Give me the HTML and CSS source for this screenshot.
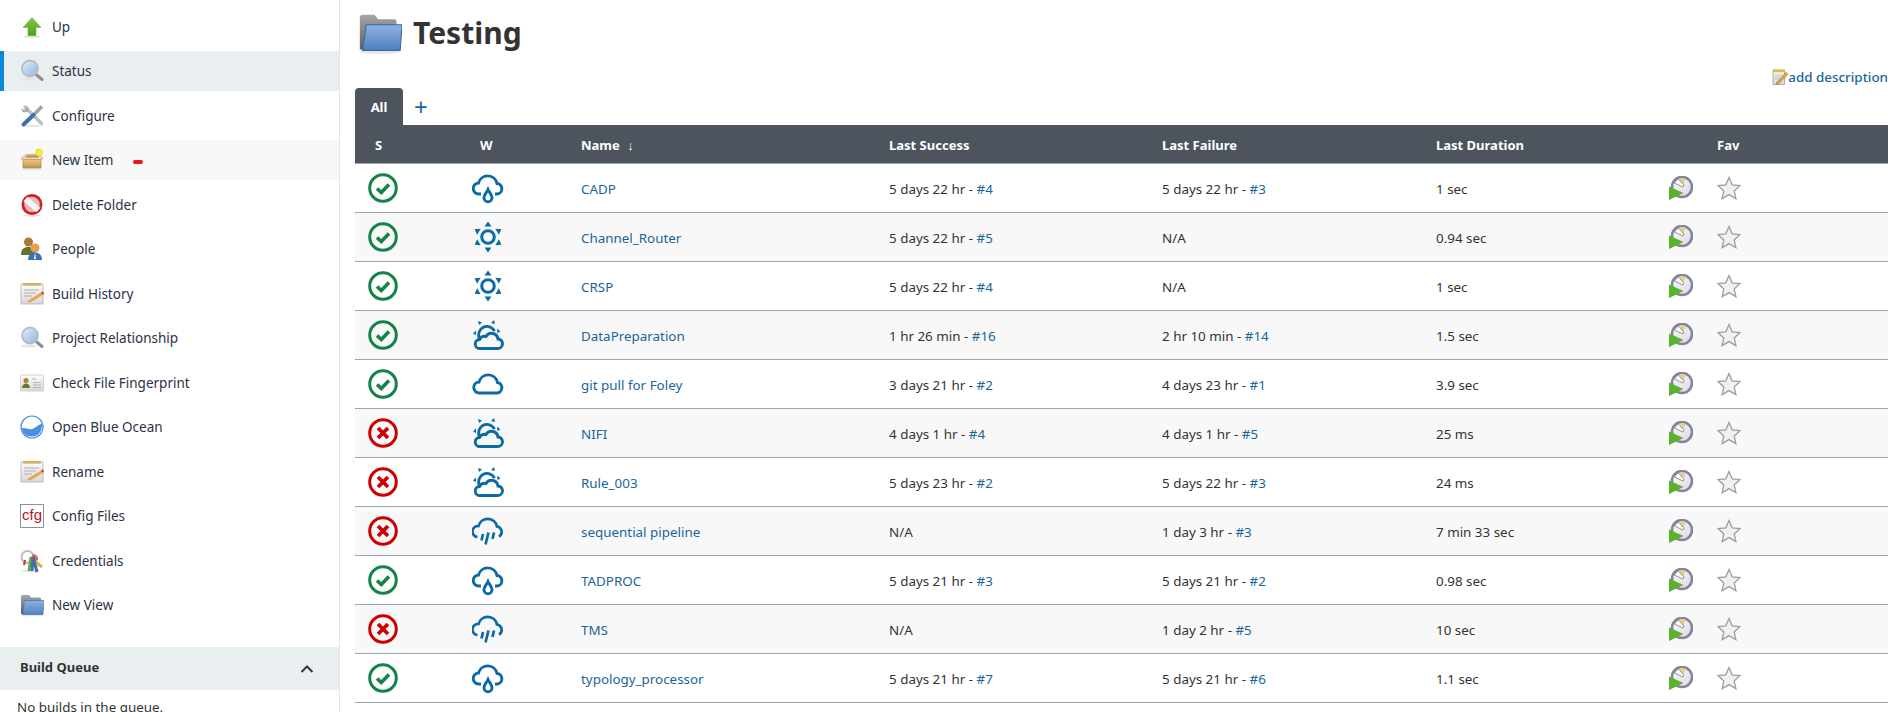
FILE: index.html
```html
<!DOCTYPE html>
<html lang="en">
<head>
    <meta charset="UTF-8">
    <title>Testing</title>
    <link rel="stylesheet" href="styles.css">
</head>
<body>
    <svg class="icon-defs" xmlns="http://www.w3.org/2000/svg">
        <defs>
            <linearGradient id="g-green" x1="0" y1="0" x2="0" y2="1"><stop offset="0" stop-color="#8cc152"/><stop offset="1" stop-color="#4ca50c"/></linearGradient>
            <linearGradient id="g-lens" x1="0" y1="0" x2="1" y2="1"><stop offset="0" stop-color="#e4eefa"/><stop offset="1" stop-color="#8db4e2"/></linearGradient>
            <linearGradient id="g-box" x1="0" y1="0" x2="0" y2="1"><stop offset="0" stop-color="#e8c88f"/><stop offset="1" stop-color="#c8924a"/></linearGradient>
            <linearGradient id="g-folder" x1="0" y1="0" x2="0" y2="1"><stop offset="0" stop-color="#8db2df"/><stop offset="1" stop-color="#4f80c0"/></linearGradient>
            <linearGradient id="g-grey" x1="0" y1="0" x2="0" y2="1"><stop offset="0" stop-color="#a6a6a6"/><stop offset="1" stop-color="#5e5e5e"/></linearGradient>
            <linearGradient id="g-paper" x1="0" y1="0" x2="0" y2="1"><stop offset="0" stop-color="#fbfbfb"/><stop offset="1" stop-color="#d8d8d8"/></linearGradient>
            <linearGradient id="g-face" x1="0" y1="0" x2="1" y2="1"><stop offset="0" stop-color="#fafafa"/><stop offset="1" stop-color="#d9d9e2"/></linearGradient>
        </defs>

        <symbol id="i-up" viewBox="0 0 24 24">
            <ellipse cx="12" cy="21.5" rx="8" ry="1.4" fill="#ddd"/>
            <path d="M12 2.5 21 12.5h-5v8H8v-8H3z" fill="url(#g-green)" stroke="#6d9f3a" stroke-width=".5"/>
        </symbol>
        <symbol id="i-search" viewBox="0 0 24 24">
            <ellipse cx="9" cy="20" rx="8" ry="1.6" fill="#e6e6e6"/>
            <path d="M15 14.5 22 20.5" stroke="#8a8f96" stroke-width="3" stroke-linecap="round"/>
            <circle cx="10" cy="9.5" r="8" fill="url(#g-lens)" stroke="#b8bcc2" stroke-width="1.8"/>
        </symbol>
        <symbol id="i-tools" viewBox="0 0 24 24">
            <ellipse cx="12" cy="22" rx="10" ry="1.2" fill="#e6e6e6"/>
            <path d="M5 3 21.5 19.5" stroke="#bcc0c4" stroke-width="3.4" stroke-linecap="round"/>
            <path d="M6.500 1.500a4.800 4.800 0 0 1 1.500 6.500L3.500 8.500A4.800 4.800 0 0 1 1.500 4L4 6 6.500 4z" fill="#a9adb3"/>
            <path d="M22 2.500 13 11.500" stroke="#9aa3ad" stroke-width="3.400"/>
            <path d="M13.500 11 3.500 20.500" stroke="#3f6fae" stroke-width="4" stroke-linecap="round"/>
        </symbol>
        <symbol id="i-box" viewBox="0 0 24 24">
            <ellipse cx="12" cy="21" rx="10" ry="1.300" fill="#e6e6e6"/>
            <path d="M3 11h18v9H3z" fill="url(#g-box)" stroke="#a87a3c" stroke-width=".6"/>
            <path d="M1 10.500 6 6.500h12l5 4-2 1H3z" fill="#f0dcb5" stroke="#b98d4f" stroke-width=".6"/>
            <path d="M7 7.500h10l2 2H5z" fill="#a98a5f"/>
            <circle cx="19" cy="4.500" r="3.400" fill="#f7ee3c" stroke="#e0c91a" stroke-width=".6"/>
        </symbol>
        <symbol id="i-delete" viewBox="0 0 24 24">
            <ellipse cx="12" cy="22.500" rx="9" ry="1.200" fill="#ddd"/>
            <circle cx="12" cy="11.500" r="10.500" fill="#cb1f24"/>
            <circle cx="12" cy="11.500" r="7.800" fill="#e9b9b9"/>
            <path d="M5.500 6 18.500 17" stroke="#f7f7f7" stroke-width="6"/>
            <path d="M5.500 4.500 18.500 15.500" stroke="#cb1f24" stroke-width="0"/>
        </symbol>
        <symbol id="i-people" viewBox="0 0 24 24">
            <circle cx="8.500" cy="5" r="4.500" fill="#a67c3c"/>
            <path d="M1 18c0-6 3-8 7.500-8s7 2 7 8z" fill="#66752d"/>
            <circle cx="15" cy="11" r="4.500" fill="#e3a04f"/>
            <path d="M8 23c0-5 3-7.500 7-7.500s7 2.500 7 7.500z" fill="#3a73b5"/>
            <path d="M15 15.500 14 22h2z" fill="#fff"/>
        </symbol>
        <symbol id="i-notepad" viewBox="0 0 24 24">
            <rect x="1" y="2" width="22" height="20" fill="url(#g-paper)" stroke="#b0b0b0" stroke-width=".8"/>
            <rect x="3" y="1" width="18" height="2.600" fill="#c9b458"/>
            <path d="M4 8h15M4 11h12M4 14h8" stroke="#b0b0b0" stroke-width="1"/>
            <path d="M8 18.500 21 10.500l2.200 2.200-12 7.300-4 .5z" fill="#e0a94f"/>
            <path d="M21 10.500l2.200 2.200 1-1.200-2-2.200z" fill="#c8322d"/>
        </symbol>
        <symbol id="i-card" viewBox="0 0 24 24">
            <rect x=".5" y="4" width="23" height="16" rx="1" fill="url(#g-paper)" stroke="#c0c0c0" stroke-width=".7"/>
            <circle cx="6" cy="9.500" r="2.500" fill="#a8812f"/>
            <path d="M2 17c0-3 2-4.500 4-4.500s4 1.500 4 4.500z" fill="#5d7a2e"/>
            <path d="M12 8h4M13 11.500h8M13 14h8M13 16.500h8" stroke="#b5b5b5" stroke-width="1"/>
        </symbol>
        <symbol id="i-ocean" viewBox="0 0 24 24">
            <circle cx="12" cy="12" r="11" fill="#fff" stroke="#4a90e8" stroke-width="1.200"/>
            <path d="M2 13.500C5 12 8 15 12 14S18 9 22 9c.4 5-2 12.500-10 12.500C6 21.500 2.500 18 2 13.500z" fill="#4a90e2"/>
        </symbol>
        <symbol id="i-keys" viewBox="0 0 24 24">
            <ellipse cx="10" cy="22" rx="9" ry="1.200" fill="#e3e3e3"/>
            <circle cx="7.500" cy="8" r="6" fill="none" stroke="#bbb" stroke-width="1.800"/>
            <path d="M13 11 22 18" stroke="#d5b64a" stroke-width="3.400"/>
            <path d="M13 5a5 5 0 0 1 5 6l-4 2-4-3z" fill="#d9694a"/>
            <path d="M11 8 9 22" stroke="#5fae3c" stroke-width="3"/>
            <path d="M13 8 17 23M13 8 12 22" stroke="#3f6fae" stroke-width="3"/>
            <path d="M5 11 4 16" stroke="#c8322d" stroke-width="2"/>
        </symbol>
        <symbol id="i-folder" viewBox="0 0 24 24">
            <ellipse cx="12" cy="22.300" rx="11" ry="1" fill="#e3e3e3"/>
            <path d="M1 3.500Q1 2 2.500 2H9l2 2.500h9q1 0 1 1.500v2H4.500L3.500 21H1z" fill="url(#g-grey)"/>
            <path d="M4.500 7.500H24L23 21.500H2.500z" fill="url(#g-folder)" stroke="#3c68a5" stroke-width=".6"/>
        </symbol>
        <symbol id="i-edit" viewBox="0 0 24 24">
            <rect x="1.500" y="3" width="17" height="20" fill="url(#g-paper)" stroke="#8a8a8a"/>
            <rect x="2" y="1" width="17" height="3.500" fill="#e3c04a" stroke="#b5952f" stroke-width=".5"/>
            <path d="M4 9h11M4 12h9M4 15h6" stroke="#b0b0b0"/>
            <path d="M7 20 21 5l3 3-14 14-4 1z" fill="#e0a94f" stroke="#7d5a1f" stroke-width=".7"/>
        </symbol>

        <symbol id="s-ok" viewBox="0 0 30 30">
            <circle cx="15" cy="15" r="13.300" fill="none" stroke="#138347" stroke-width="3"/>
            <path d="M9 15.500 13.300 19.500 21 11.500" fill="none" stroke="#138347" stroke-width="3.600"/>
        </symbol>
        <symbol id="s-fail" viewBox="0 0 30 30">
            <circle cx="15" cy="15" r="13.300" fill="none" stroke="#cc0003" stroke-width="3"/>
            <path d="M10 10 20 20M20 10 10 20" fill="none" stroke="#cc0003" stroke-width="3.800"/>
        </symbol>

        <symbol id="w-drop" viewBox="0 0 32 32">
            <g fill="none" stroke="#0b6aa2" stroke-width="2.900">
                <path d="M9 22H7a5.500 5.500 0 0 1-.5-11A9.500 9.500 0 0 1 25 11.500 5.300 5.300 0 0 1 25.500 22H23"/>
                <path d="M16 17.500C14.500 21 12 22.500 12 25.700a4 4 0 0 0 8 0C20 22.500 17.500 21 16 17.500z"/>
            </g>
        </symbol>
        <symbol id="w-sun" viewBox="0 0 32 32">
            <circle cx="16" cy="16" r="6.300" fill="none" stroke="#0b6aa2" stroke-width="3"/>
            <g fill="#0b6aa2">
                <path d="M16 .5 19.500 5.500h-7z"/>
                <path d="M16 .5 19.500 5.500h-7z" transform="rotate(60 16 16)"/>
                <path d="M16 .5 19.500 5.500h-7z" transform="rotate(120 16 16)"/>
                <path d="M16 .5 19.500 5.500h-7z" transform="rotate(180 16 16)"/>
                <path d="M16 .5 19.500 5.500h-7z" transform="rotate(240 16 16)"/>
                <path d="M16 .5 19.500 5.500h-7z" transform="rotate(300 16 16)"/>
            </g>
        </symbol>
        <symbol id="w-partly" viewBox="0 0 32 32">
            <g fill="none" stroke="#0b6aa2" stroke-width="2.900">
                <path d="M8 29.500H25.500a4.500 4.500 0 0 0 .5-9.500A6.500 6.500 0 0 0 14 17.500 6 6 0 0 0 7.500 20.500 4.500 4.500 0 0 0 8 29.500z"/>
                <path d="M7.500 19.500A8 8 0 0 1 22.500 12"/>
            </g>
            <g fill="#0b6aa2">
                <path d="M6 2 10 3.500 7 6z"/>
                <path d="M22 1 23 5 19 4z"/>
                <path d="M1 14.500 4 11.500 4 16z"/>
                <path d="M28.500 12.500 25 9.500 25.500 14z"/>
            </g>
        </symbol>
        <symbol id="w-cloud" viewBox="0 0 32 32">
            <path d="M7.500 25H25a5.300 5.300 0 0 0 .5-10.500A9.500 9.500 0 0 0 7 14 5.500 5.500 0 0 0 7.500 25z" fill="none" stroke="#0b6aa2" stroke-width="2.900"/>
        </symbol>
        <symbol id="w-rain" viewBox="0 0 32 32">
            <g fill="none" stroke="#0b6aa2" stroke-width="2.700">
                <path d="M5.500 22A5.500 5.500 0 0 1 6.500 11 9.500 9.500 0 0 1 25 11.500 5.400 5.400 0 0 1 27 21.500"/>
                <path d="M11 19 9.500 25.500M16.500 17.500 13.500 29.500M22 17.500 20.500 24"/>
            </g>
        </symbol>

        <symbol id="a-build" viewBox="0 0 24 24">
            <circle cx="13" cy="11" r="10" fill="url(#g-face)" stroke="#86829e" stroke-width="2.600"/>
            <path d="M13 11 10.500 2.500A9 9 0 0 1 17 3z" fill="#e3d28c"/>
            <path d="M14 11 5.500 7 9 2.800 15 9z" fill="#fff" stroke="#6b6b6b" stroke-width=".7"/>
            <path d="M0 10.500 14.500 17 0 24z" fill="#58b32c"/>
        </symbol>
        <symbol id="a-star" viewBox="0 0 24 24">
            <path d="M12 1.500 15.200 8.800 23 9.600 17.200 14.900 18.900 22.600 12 18.600 5.100 22.600 6.800 14.900 1 9.600 8.800 8.800z" fill="#f1f1f1" stroke="#9e9e9e" stroke-width="1.300"/>
        </symbol>
    </svg>

    <div class="page">
        <aside class="sidebar">
            <ul class="task-list">
                <li class="task"><svg class="task-icon"><use href="#i-up"/></svg>Up</li>
                <li class="task active"><svg class="task-icon"><use href="#i-search"/></svg>Status</li>
                <li class="task"><svg class="task-icon"><use href="#i-tools"/></svg>Configure</li>
                <li class="task hovered"><svg class="task-icon"><use href="#i-box"/></svg>New Item<span class="red-dash"></span></li>
                <li class="task"><svg class="task-icon"><use href="#i-delete"/></svg>Delete Folder</li>
                <li class="task"><svg class="task-icon"><use href="#i-people"/></svg>People</li>
                <li class="task"><svg class="task-icon"><use href="#i-notepad"/></svg>Build History</li>
                <li class="task"><svg class="task-icon"><use href="#i-search"/></svg>Project Relationship</li>
                <li class="task"><svg class="task-icon"><use href="#i-card"/></svg>Check File Fingerprint</li>
                <li class="task"><svg class="task-icon"><use href="#i-ocean"/></svg>Open Blue Ocean</li>
                <li class="task"><svg class="task-icon"><use href="#i-notepad"/></svg>Rename</li>
                <li class="task">
                    <svg class="task-icon" viewBox="0 0 24 24">
                        <rect x=".5" y=".5" width="23" height="23" fill="#fff" stroke="#777" stroke-width=".8"/>
                        <text class="cfg-text" x="12" y="16" text-anchor="middle">cfg</text>
                    </svg>Config Files
                </li>
                <li class="task"><svg class="task-icon"><use href="#i-keys"/></svg>Credentials</li>
                <li class="task"><svg class="task-icon"><use href="#i-folder"/></svg>New View</li>
            </ul>
            <div class="queue-head">
                <span>Build Queue</span>
                <svg class="chevron" viewBox="0 0 14 10"><path d="M1.500 8 7 2.500 12.500 8" fill="none" stroke="#333" stroke-width="2"/></svg>
            </div>
            <div class="queue-body">No builds in the queue.</div>
        </aside>

        <main class="content">
            <h1 class="title"><svg class="title-icon"><use href="#i-folder"/></svg>Testing</h1>
            <div class="description"><svg class="edit-icon"><use href="#i-edit"/></svg><a href="#">add description</a></div>
            <div class="tabs">
                <div class="tab">All</div>
                <a class="tab-add" href="#">+</a>
            </div>
            <table class="projects">
                <colgroup>
                    <col class="c-s"><col class="c-w"><col class="c-name"><col class="c-ok"><col class="c-fail"><col class="c-dur"><col class="c-run"><col>
                </colgroup>
                <thead>
                    <tr>
                        <th class="th-s">S</th>
                        <th class="th-w">W</th>
                        <th>Name <span class="sort">↓</span></th>
                        <th>Last Success</th>
                        <th>Last Failure</th>
                        <th>Last Duration</th>
                        <th></th>
                        <th>Fav</th>
                    </tr>
                </thead>
                <tbody>
                    <tr>
                        <td class="td-s"><svg class="status"><use href="#s-ok"/></svg></td>
                        <td class="td-w"><svg class="weather"><use href="#w-drop"/></svg></td>
                        <td><a href="#">CADP</a></td>
                        <td>5 days 22 hr - <a href="#">#4</a></td>
                        <td>5 days 22 hr - <a href="#">#3</a></td>
                        <td>1 sec</td>
                        <td class="td-icon"><svg class="action"><use href="#a-build"/></svg></td>
                        <td class="td-icon"><svg class="action"><use href="#a-star"/></svg></td>
                    </tr>
                    <tr>
                        <td class="td-s"><svg class="status"><use href="#s-ok"/></svg></td>
                        <td class="td-w"><svg class="weather"><use href="#w-sun"/></svg></td>
                        <td><a href="#">Channel_Router</a></td>
                        <td>5 days 22 hr - <a href="#">#5</a></td>
                        <td>N/A</td>
                        <td>0.94 sec</td>
                        <td class="td-icon"><svg class="action"><use href="#a-build"/></svg></td>
                        <td class="td-icon"><svg class="action"><use href="#a-star"/></svg></td>
                    </tr>
                    <tr>
                        <td class="td-s"><svg class="status"><use href="#s-ok"/></svg></td>
                        <td class="td-w"><svg class="weather"><use href="#w-sun"/></svg></td>
                        <td><a href="#">CRSP</a></td>
                        <td>5 days 22 hr - <a href="#">#4</a></td>
                        <td>N/A</td>
                        <td>1 sec</td>
                        <td class="td-icon"><svg class="action"><use href="#a-build"/></svg></td>
                        <td class="td-icon"><svg class="action"><use href="#a-star"/></svg></td>
                    </tr>
                    <tr>
                        <td class="td-s"><svg class="status"><use href="#s-ok"/></svg></td>
                        <td class="td-w"><svg class="weather"><use href="#w-partly"/></svg></td>
                        <td><a href="#">DataPreparation</a></td>
                        <td>1 hr 26 min - <a href="#">#16</a></td>
                        <td>2 hr 10 min - <a href="#">#14</a></td>
                        <td>1.5 sec</td>
                        <td class="td-icon"><svg class="action"><use href="#a-build"/></svg></td>
                        <td class="td-icon"><svg class="action"><use href="#a-star"/></svg></td>
                    </tr>
                    <tr>
                        <td class="td-s"><svg class="status"><use href="#s-ok"/></svg></td>
                        <td class="td-w"><svg class="weather"><use href="#w-cloud"/></svg></td>
                        <td><a href="#">git pull for Foley</a></td>
                        <td>3 days 21 hr - <a href="#">#2</a></td>
                        <td>4 days 23 hr - <a href="#">#1</a></td>
                        <td>3.9 sec</td>
                        <td class="td-icon"><svg class="action"><use href="#a-build"/></svg></td>
                        <td class="td-icon"><svg class="action"><use href="#a-star"/></svg></td>
                    </tr>
                    <tr>
                        <td class="td-s"><svg class="status"><use href="#s-fail"/></svg></td>
                        <td class="td-w"><svg class="weather"><use href="#w-partly"/></svg></td>
                        <td><a href="#">NIFI</a></td>
                        <td>4 days 1 hr - <a href="#">#4</a></td>
                        <td>4 days 1 hr - <a href="#">#5</a></td>
                        <td>25 ms</td>
                        <td class="td-icon"><svg class="action"><use href="#a-build"/></svg></td>
                        <td class="td-icon"><svg class="action"><use href="#a-star"/></svg></td>
                    </tr>
                    <tr>
                        <td class="td-s"><svg class="status"><use href="#s-fail"/></svg></td>
                        <td class="td-w"><svg class="weather"><use href="#w-partly"/></svg></td>
                        <td><a href="#">Rule_003</a></td>
                        <td>5 days 23 hr - <a href="#">#2</a></td>
                        <td>5 days 22 hr - <a href="#">#3</a></td>
                        <td>24 ms</td>
                        <td class="td-icon"><svg class="action"><use href="#a-build"/></svg></td>
                        <td class="td-icon"><svg class="action"><use href="#a-star"/></svg></td>
                    </tr>
                    <tr>
                        <td class="td-s"><svg class="status"><use href="#s-fail"/></svg></td>
                        <td class="td-w"><svg class="weather"><use href="#w-rain"/></svg></td>
                        <td><a href="#">sequential pipeline</a></td>
                        <td>N/A</td>
                        <td>1 day 3 hr - <a href="#">#3</a></td>
                        <td>7 min 33 sec</td>
                        <td class="td-icon"><svg class="action"><use href="#a-build"/></svg></td>
                        <td class="td-icon"><svg class="action"><use href="#a-star"/></svg></td>
                    </tr>
                    <tr>
                        <td class="td-s"><svg class="status"><use href="#s-ok"/></svg></td>
                        <td class="td-w"><svg class="weather"><use href="#w-drop"/></svg></td>
                        <td><a href="#">TADPROC</a></td>
                        <td>5 days 21 hr - <a href="#">#3</a></td>
                        <td>5 days 21 hr - <a href="#">#2</a></td>
                        <td>0.98 sec</td>
                        <td class="td-icon"><svg class="action"><use href="#a-build"/></svg></td>
                        <td class="td-icon"><svg class="action"><use href="#a-star"/></svg></td>
                    </tr>
                    <tr>
                        <td class="td-s"><svg class="status"><use href="#s-fail"/></svg></td>
                        <td class="td-w"><svg class="weather"><use href="#w-rain"/></svg></td>
                        <td><a href="#">TMS</a></td>
                        <td>N/A</td>
                        <td>1 day 2 hr - <a href="#">#5</a></td>
                        <td>10 sec</td>
                        <td class="td-icon"><svg class="action"><use href="#a-build"/></svg></td>
                        <td class="td-icon"><svg class="action"><use href="#a-star"/></svg></td>
                    </tr>
                    <tr>
                        <td class="td-s"><svg class="status"><use href="#s-ok"/></svg></td>
                        <td class="td-w"><svg class="weather"><use href="#w-drop"/></svg></td>
                        <td><a href="#">typology_processor</a></td>
                        <td>5 days 21 hr - <a href="#">#7</a></td>
                        <td>5 days 21 hr - <a href="#">#6</a></td>
                        <td>1.1 sec</td>
                        <td class="td-icon"><svg class="action"><use href="#a-build"/></svg></td>
                        <td class="td-icon"><svg class="action"><use href="#a-star"/></svg></td>
                    </tr>
                </tbody>
            </table>
        </main>
    </div>
</body>
</html>
```

FILE: styles.css
```css
html, body {
    height: 100%;
    overflow: hidden;
}
body {
    margin: 0;
    font-family: "Noto Sans", "Open Sans", sans-serif;
    font-size: 13.4px;
    color: #333;
    background-color: #fff;
}
a {
    color: #1a6599;
    text-decoration: none;
}
.icon-defs {
    position: absolute;
    width: 0;
    height: 0;
}
.page {
    display: flex;
    height: 100%;
}

/* side panel */
.sidebar {
    width: 339px;
    flex-shrink: 0;
    border-right: 1px solid #e4e6e8;
}
.task-list {
    list-style: none;
    margin: 0;
    padding: 6.5px 0 0;
    display: flex;
    flex-direction: column;
    gap: 4.5px;
}
.task {
    height: 40px;
    display: flex;
    align-items: center;
    gap: 8px;
    padding-left: 20px;
    color: #2b3245;
    font-size: 13.5px;
}
.task.active {
    background-color: #e9eef0;
    box-shadow: inset 4px 0 0 #0b87d8;
}
.task.hovered {
    background-color: #f8f8f8;
}
.task-icon {
    width: 24px;
    height: 24px;
}
.red-dash {
    width: 10px;
    height: 4px;
    margin-left: 12px;
    margin-top: 3px;
    border-radius: 2px;
    background-color: #e8141c;
}
.cfg-text {
    font-family: "Liberation Sans", sans-serif;
    font-size: 15px;
    fill: #b8141c;
}
.queue-head {
    height: 43px;
    margin-top: 22px;
    padding: 0 20px 3px;
    display: flex;
    align-items: center;
    justify-content: space-between;
    box-sizing: border-box;
    background-color: #e9eef0;
    font-size: 13px;
    font-weight: bold;
}
.chevron {
    width: 14px;
    height: 10px;
    margin-right: 5px;
    margin-top: 3px;
}
.queue-body {
    padding: 8px 17px;
}

/* main area */
.content {
    flex: 1;
    min-width: 0;
    padding: 0 13px 0 15px;
}
.title {
    display: flex;
    align-items: center;
    gap: 11px;
    height: 66px;
    margin: 0;
    padding-left: 3px;
    font-size: 30px;
    font-weight: bold;
    line-height: 1;
    box-sizing: border-box;
}
.title-icon {
    width: 44px;
    height: 44px;
}
.description {
    display: flex;
    justify-content: flex-end;
    align-items: center;
    height: 22px;
    font-weight: 500;
}
.edit-icon {
    width: 16px;
    height: 16px;
}
.tabs {
    display: flex;
    align-items: center;
    height: 37px;
}
.tab {
    width: 48px;
    height: 37px;
    padding-top: 1px;
    line-height: 37px;
    text-align: center;
    box-sizing: border-box;
    border-radius: 4px 4px 0 0;
    background-color: #4d545d;
    color: #fff;
    font-size: 13px;
    font-weight: bold;
}
.tab-add {
    margin-left: 11px;
    font-size: 24px;
    line-height: 37px;
}
.projects {
    width: 100%;
    table-layout: fixed;
    border-collapse: collapse;
}
.c-s { width: 100px; }
.c-w { width: 126px; }
.c-name { width: 308px; }
.c-ok { width: 273px; }
.c-fail { width: 274px; }
.c-dur { width: 233px; }
.c-run { width: 48px; }
.projects th {
    height: 38px;
    padding: 2px 0 0;
    text-align: left;
    background-color: #4d545d;
    border-bottom: 1px solid #9aa7b2;
    color: #fff;
    font-size: 13px;
    font-weight: bold;
    box-sizing: border-box;
}
.projects th.th-s { padding-left: 20px; }
.projects th.th-w { padding-left: 25px; }
.sort {
    margin-left: 4px;
    font-weight: normal;
}
.projects td {
    height: 49px;
    padding: 2px 0 0;
    border-bottom: 1px solid #9aa7b2;
    box-sizing: border-box;
}
.projects tbody tr:nth-child(even) {
    background-color: #f8f8f8;
}
.projects td.td-s { padding: 0 0 0 13px; }
.projects td.td-w { padding: 0 0 0 17px; }
.projects td.td-icon { padding: 0; }
.projects svg {
    display: block;
}
.status {
    width: 30px;
    height: 30px;
}
.weather {
    width: 32px;
    height: 32px;
}
.action {
    width: 24px;
    height: 24px;
}
```
